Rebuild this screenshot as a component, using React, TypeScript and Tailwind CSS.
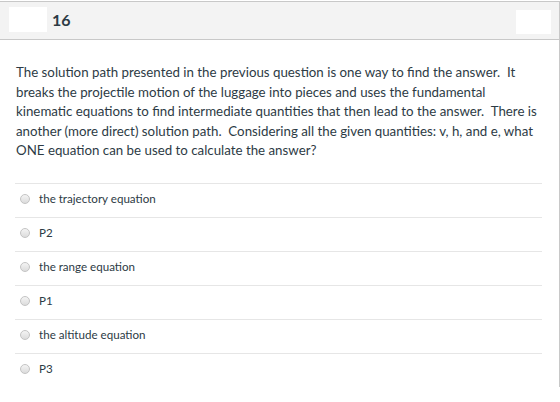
import React from 'react';

const options = [
  'the trajectory equation',
  'P2',
  'the range equation',
  'P1',
  'the altitude equation',
  'P3',
];

function Radio() {
  return (
    <span className="block size-[10px] rounded-full border border-[#c4c4c4] bg-gradient-to-b from-[#f4f4f4] to-[#dcdcdc]" />
  );
}

export default function App() {
  return (
    <div className="h-[402px] w-[560px] overflow-hidden bg-white font-['Lato',sans-serif] text-[#2d3b45]">
      <div className="mt-px border-t border-r border-[#c8c8c8]">
        {/* question header */}
        <div className="flex h-[38px] items-center justify-between border-b border-[#c8c8c8] bg-[#f3f3f3] pl-[9px] pr-[8px]">
          <div className="flex items-center gap-[5px]">
            <div className="h-[25px] w-[38px] -translate-y-px bg-white" />
            <span className="-translate-y-[1px] text-[16px] font-bold text-[#2d3b45]">16</span>
          </div>
          <div className="h-[24px] w-[35px] translate-y-px bg-white" />
        </div>

        {/* question text */}
        <div className="pl-4 pt-[23px] text-[13.3px] leading-[19.5px]">
          <p className="whitespace-pre">
            {'The solution path presented in the previous question is one way to find the answer.  It\n'}
            {'breaks the projectile motion of the luggage into pieces and uses the fundamental\n'}
            {'kinematic equations to find intermediate quantities that then lead to the answer.  There is\n'}
            {'another (more direct) solution path.  Considering all the given quantities: v, h, and e, what\n'}
            {'ONE equation can be used to calculate the answer?'}
          </p>
        </div>

        {/* answers */}
        <div className="ml-[15px] mt-[22px] w-[527px]">
          {options.map((label) => (
            <div key={label} className="flex h-[34px] items-center border-t border-[#e6e6e6] pb-[2px] text-[11.6px]">
              <div className="ml-[5px] mr-[9px]">
                <Radio />
              </div>
              <span>{label}</span>
            </div>
          ))}
        </div>
      </div>
    </div>
  );
}
